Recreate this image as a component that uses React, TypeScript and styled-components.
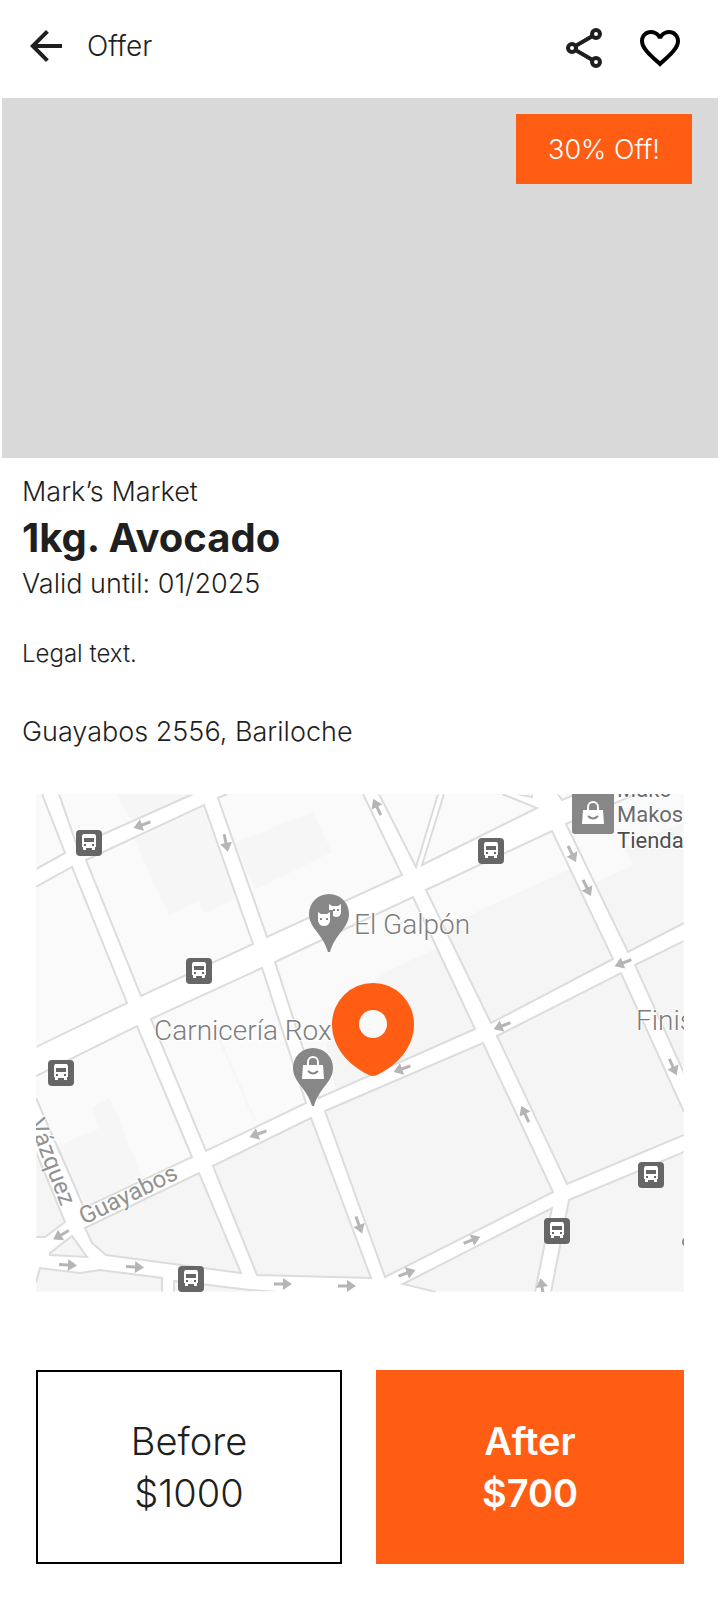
import React from "react";
import styled, { createGlobalStyle } from "styled-components";
import { MdArrowBack, MdFavoriteBorder } from "react-icons/md";

const ink = "#1f1f1f";
const accent = "#ff5c14";

const GlobalStyle = createGlobalStyle`
  * { box-sizing: border-box; }
  body {
    margin: 0;
    background: #ffffff;
    color: ${ink};
    font-family: Inter, "Liberation Sans", sans-serif;
    font-weight: 350;
  }
`;

const Page = styled.div`
  padding-bottom: 36px;
`;

const Header = styled.header`
  display: flex;
  align-items: flex-start;
  height: 98px;
  padding: 22px 36px 0 22px;
`;

const IconButton = styled.button`
  display: flex;
  padding: 0;
  border: 0;
  background: none;
  color: ${ink};
`;

const HeaderTitle = styled.span`
  margin-left: 17px;
  font-size: 28px;
  font-weight: 300;
  line-height: 48px;
`;

const Actions = styled.div`
  display: flex;
  gap: 28px;
  margin-left: auto;
  padding-top: 2px;
`;

const Hero = styled.section`
  display: flex;
  align-items: flex-start;
  justify-content: flex-end;
  height: 360px;
  margin: 0 2px;
  padding: 16px 26px;
  background: #d9d9d9;
`;

const Badge = styled.span`
  min-width: 176px;
  padding: 17px 0 15px;
  background: ${accent};
  color: #ffffff;
  font-size: 27px;
  font-weight: 300;
  line-height: 38px;
  text-align: center;
`;

const Details = styled.section`
  display: flex;
  flex-direction: column;
  padding: 15px 22px 0;
`;

const Line = styled.p`
  margin: 0;
  font-size: 27px;
  line-height: 38px;
`;

const Title = styled.h1`
  margin: 0;
  font-size: 40px;
  font-weight: 700;
  line-height: 54px;
`;

const Legal = styled.p`
  margin: 35px 0 43px;
  font-size: 24px;
  line-height: 32px;
`;

const MapFrame = styled.section`
  margin: 43px 36px 0;
`;

const MapDrawing = styled.svg`
  display: block;
  width: 100%;
  height: auto;
  font-family: Roboto, sans-serif;
`;

const Prices = styled.section`
  display: grid;
  grid-template-columns: 306fr 308fr;
  gap: 34px;
  margin: 78px 36px 0;
`;

const PriceCard = styled.div<{ $filled?: boolean }>`
  display: flex;
  flex-direction: column;
  align-items: center;
  padding: 43px 16px;
  border: 2px solid ${(p) => (p.$filled ? accent : "#000000")};
  background: ${(p) => (p.$filled ? accent : "#ffffff")};
  color: ${(p) => (p.$filled ? "#ffffff" : ink)};
  font-size: 38px;
  font-weight: ${(p) => (p.$filled ? 600 : 300)};
  line-height: 52px;
`;

const lightBlocks = [
  "0,0 6,0 29,59 0,75",
  "0,93 36,73 91,209 0,253",
  "23,0 157,0 41,52",
  "50,66 168,11 217,150 105,202",
  "182,4 191,0 327,0 366,81 231,143",
  "343,0 402,0 380,73",
  "408,0 466,0 501,14 386,71",
  "481,0 496,0 496,3",
  "522,0 526,6 540,0",
  "530,30 600,0 648,0 648,129 592,158",
  "390,96 516,37 577,165 455,229",
  "239,168 377,103 439,235 283,304",
  "115,225 226,174 270,309 170,357",
  "0,282 101,232 156,363 48,414 42,400 0,304",
];

const shadedBlocks = [
  "0,358 29,428 9,443 0,443",
  "49,434 163,379 205,479 70,461 56,449",
  "14,459 36,442 51,463 14,461",
  "0,489 4,474 44,479 64,476 126,484 126,498 0,498",
  "138,498 138,487 214,496 240,498",
  "177,372 275,324 335,484 221,481",
  "289,317 447,249 517,398 349,483",
  "461,242 585,179 648,318 648,341 531,390",
  "599,171 648,147 648,279",
  "533,406 648,358 648,498 515,498",
  "367,490 516,414 499,498 400,498",
];

const buildings = [
  "99,46 132,120 164,108 169,119 201,104 167,13",
  "81,0 96,27 155,0",
  "199,49 277,18 296,58 219,96",
  "19,353 64,334 56,314 74,304 106,384 50,411",
];

const shadedGround = [
  "408,133 534,75 577,165 455,229",
  "559,89 597,71 588,53 648,28 648,129 592,158",
  "352,177 401,154 439,235 300,296 290,250 320,200",
];

const arrows = [
  [106, 31, 160], [190, 49, 78], [341, 13, -115], [536, 60, 64], [551, 94, 64],
  [587, 169, 158], [466, 232, 158], [366, 275, 160], [489, 320, -115], [637, 273, 66],
  [436, 446, -22], [371, 479, -20], [323, 431, 70], [506, 493, -100], [222, 340, 160],
  [25, 441, 150], [32, 471, 3], [99, 473, 3], [247, 490, 0], [311, 492, 0],
];

const stops = [[53, 49], [163, 177], [455, 57], [25, 279], [155, 485], [615, 381], [521, 437]];

const ShareIcon = () => (
  <svg width="48" height="48" viewBox="0 0 24 24" fill="none" stroke="currentColor" strokeWidth="2">
    <circle cx="18" cy="5" r="2" />
    <circle cx="6" cy="12" r="2" />
    <circle cx="18" cy="19" r="2" />
    <path d="M7.7 11L16.3 6M7.7 13L16.3 18" />
  </svg>
);

const BusStop = ({ x, y }: { x: number; y: number }) => (
  <g transform={`translate(${x - 13} ${y - 13})`}>
    <rect width="26" height="26" rx="4" fill="#666666" />
    <path d="M7 4h12l1 2v11h-1v3h-3v-2h-6v2H7v-3H6V6z" fill="#ffffff" />
    <path d="M8 8h10v4H8zM8 14h2v2H8zM16 14h2v2h-2z" fill="#666666" />
  </g>
);

const GreyPin = ({ x, y }: { x: number; y: number }) => (
  <path
    transform={`translate(${x} ${y})`}
    d="M0-20A20 20 0 0 1 20 0C20 14 6 20 1 38h-2C-6 20-20 14-20 0A20 20 0 0 1 0-20z"
    fill="#878787"
  />
);

const Bag = ({ x, y }: { x: number; y: number }) => (
  <g transform={`translate(${x} ${y})`}>
    <path d="M-10-2h20L11 12h-22z" fill="#ffffff" />
    <path d="M-5-1v-4a5 5 0 0 1 10 0v4" fill="none" stroke="#ffffff" strokeWidth="2" />
    <path d="M-5 4Q0 9 5 4" fill="none" stroke="#878787" strokeWidth="2" />
  </g>
);

const StreetMap = () => (
  <MapDrawing viewBox="0 0 648 498" role="img" aria-label="Map of Guayabos 2556, Bariloche">
    <rect width="648" height="498" fill="#ffffff" />
    {lightBlocks.map((points) => <polygon key={points} points={points} fill="#fafafa" />)}
    {shadedBlocks.map((points) => <polygon key={points} points={points} fill="#f5f5f5" />)}
    {buildings.map((points) => <polygon key={points} points={points} fill="#f6f6f6" />)}
    {shadedGround.map((points) => <polygon key={points} points={points} fill="#f5f5f5" />)}
    <path d="M184 246L219 327" stroke="#f6f6f6" strokeWidth="3" />
    <g fill="none" stroke="#dcdcdc" strokeWidth="2">
      {[...lightBlocks, ...shadedBlocks].map((points) => <polygon key={points} points={points} />)}
    </g>
    <path
      d="M0 0V75M0 93V253M0 282V304M0 358V443M0 489V498H126M138 498H240M400 498H499M515 498H648V358M648 341V318M648 279V147M648 129V0H600M540 0H522M496 0H481M466 0H408M402 0H343M327 0H191M157 0H23M6 0H0"
      fill="none" stroke="#f8f8f8" strokeWidth="2"
    />
    {arrows.map(([x, y, angle]) => (
      <path
        key={`${x}-${y}`}
        transform={`translate(${x} ${y}) rotate(${angle})`}
        d="M-9-1.5H0V-6L9 0L0 6V1.5H-9z"
        fill="#b5b5b5"
      />
    ))}
    {stops.map(([x, y]) => <BusStop key={`${x}-${y}`} x={x} y={y} />)}
    <g fill="#7c7c7c" stroke="#ffffff" strokeWidth="2" paintOrder="stroke" fontSize="28" fontWeight="300">
      <text x="318" y="140">El Galpón</text>
      <text x="118" y="246">Carnicería Rox</text>
      <text x="600" y="236">Finis</text>
      <g fontSize="24" fontWeight="400" fill="#929292">
        <text transform="translate(48 431) rotate(-26)">Guayabos</text>
        <text transform="translate(25 413) rotate(69)" textAnchor="end">Vázquez</text>
      </g>
      <g fontSize="22" fontWeight="400" fill="#6b6b6b">
        <text x="581" y="3">Mako</text>
        <text x="581" y="28">Makosh</text>
        <text x="581" y="54" fill="#4d4d4d">Tienda</text>
      </g>
    </g>
    <rect x="536" y="-3" width="42" height="43" rx="3" fill="#878787" />
    <Bag x={557} y={18} />
    <GreyPin x={293} y={120} />
    <path d="M293 110l3 2h6l3-2v9q-1 4-5 4l-3-1v-6h-4z" fill="#ffffff" />
    <path d="M282 118l3 2h6l3-2v9q-1 5-6 5t-6-5z" fill="#ffffff" />
    <path d="M284 124h2v2h-2zM290 124h2v2h-2zM297 115h2v2h-2zM301 115h2v2h-2z" fill="#878787" />
    <GreyPin x={277} y={274} />
    <Bag x={277} y={273} />
    <path
      d="M337 189A41 41 0 0 1 378 230C378 255 359 272 343 280Q337 284 331 280C315 272 296 255 296 230A41 41 0 0 1 337 189z"
      fill={accent}
    />
    <circle cx="337" cy="230" r="14" fill="#fafafa" />
    <circle cx="651" cy="448" r="5" fill="#878787" />
  </MapDrawing>
);

export default function App() {
  return (
    <Page>
      <GlobalStyle />
      <Header>
        <IconButton type="button" aria-label="Back"><MdArrowBack size={48} /></IconButton>
        <HeaderTitle>Offer</HeaderTitle>
        <Actions>
          <IconButton type="button" aria-label="Share"><ShareIcon /></IconButton>
          <IconButton type="button" aria-label="Save offer"><MdFavoriteBorder size={48} color="#000000" /></IconButton>
        </Actions>
      </Header>
      <main>
        <Hero><Badge>30% Off!</Badge></Hero>
        <Details>
          <Line>Mark’s Market</Line>
          <Title>1kg. Avocado</Title>
          <Line>Valid until: 01/2025</Line>
          <Legal>Legal text.</Legal>
          <Line>Guayabos 2556, Bariloche</Line>
        </Details>
        <MapFrame><StreetMap /></MapFrame>
        <Prices>
          <PriceCard><span>Before</span><span>$1000</span></PriceCard>
          <PriceCard $filled><span>After</span><span>$700</span></PriceCard>
        </Prices>
      </main>
    </Page>
  );
}
